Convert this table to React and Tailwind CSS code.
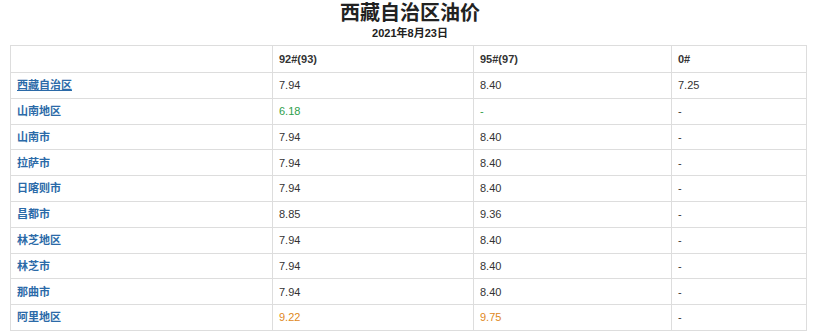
import React from "react";

const rows = [
  { name: "西藏自治区", p92: "7.94", p95: "8.40", p0: "7.25", top: true },
  { name: "山南地区", p92: "6.18", p95: "-", p0: "-", tone: "green" },
  { name: "山南市", p92: "7.94", p95: "8.40", p0: "-" },
  { name: "拉萨市", p92: "7.94", p95: "8.40", p0: "-" },
  { name: "日喀则市", p92: "7.94", p95: "8.40", p0: "-" },
  { name: "昌都市", p92: "8.85", p95: "9.36", p0: "-" },
  { name: "林芝地区", p92: "7.94", p95: "8.40", p0: "-" },
  { name: "林芝市", p92: "7.94", p95: "8.40", p0: "-" },
  { name: "那曲市", p92: "7.94", p95: "8.40", p0: "-" },
  { name: "阿里地区", p92: "9.22", p95: "9.75", p0: "-", tone: "orange" },
];

const toneClass = (tone) => {
  if (tone === "green") return "text-[#2e9e4a]";
  if (tone === "orange") return "text-[#e0881c]";
  return "text-[#333]";
};

export default function App() {
  return (
    <div className="w-[820px] h-[335px] bg-white font-['Liberation_Sans','Noto_Sans_CJK_SC',sans-serif] text-[#333]">
      <h1 className="pt-[1px] text-center text-[20px] leading-[24px] font-bold text-[#222]">西藏自治区油价</h1>
      <p className="mt-[1px] text-center text-[11px] leading-[14px] font-bold text-[#222]">2021年8月23日</p>

      <table className="ml-[10px] mt-[5px] w-[797px] border-collapse table-fixed text-[11px]">
        <thead>
          <tr className="h-[27px]">
            <th className="w-[262px] border border-[#ddd] px-[6px] text-left font-bold"></th>
            <th className="w-[201px] border border-[#ddd] px-[6px] text-left font-bold">92#(93)</th>
            <th className="w-[198px] border border-[#ddd] px-[6px] text-left font-bold">95#(97)</th>
            <th className="border border-[#ddd] px-[6px] text-left font-bold">0#</th>
          </tr>
        </thead>
        <tbody>
          {rows.map((r) => (
            <tr key={r.name} className="h-[25.8px]">
              <td className="border border-[#ddd] px-[6px]">
                <a
                  href="#"
                  className={`font-bold text-[#2b6aa8] ${r.top ? "underline text-[#1f4e79]" : "no-underline"}`}
                >
                  {r.name}
                </a>
              </td>
              <td className={`border border-[#ddd] px-[6px] ${toneClass(r.tone)}`}>{r.p92}</td>
              <td className={`border border-[#ddd] px-[6px] ${toneClass(r.tone)}`}>{r.p95}</td>
              <td className="border border-[#ddd] px-[6px]">{r.p0}</td>
            </tr>
          ))}
        </tbody>
      </table>
    </div>
  );
}
